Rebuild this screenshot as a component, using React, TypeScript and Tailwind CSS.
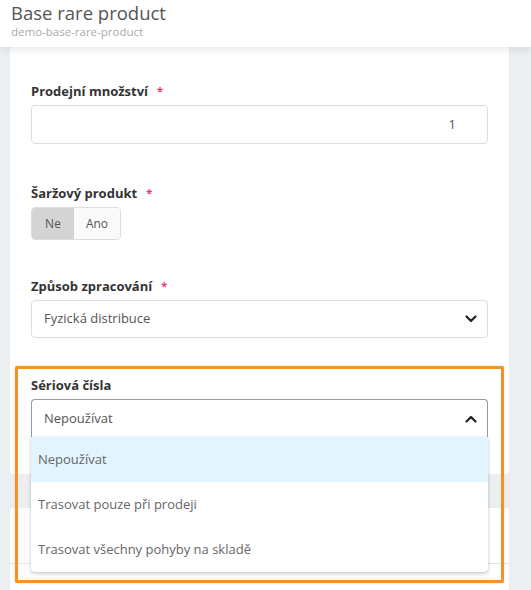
import React from "react";

function Chevron({ up = false }: { up?: boolean }) {
  return (
    <svg width="12" height="8" viewBox="0 0 12 8" className={up ? "rotate-180" : ""}>
      <path d="M1.5 1.5 L6 6 L10.5 1.5" fill="none" stroke="#222" strokeWidth="2.2" strokeLinecap="round" strokeLinejoin="round" />
    </svg>
  );
}

function Label({ text, required = false }: { text: string; required?: boolean }) {
  return (
    <div className="mb-[4px] flex items-center text-[13px] font-bold leading-[20px] text-[#333]">
      {text}
      {required && <span className="ml-[9px] text-[11px] text-[#e8336b]">*</span>}
    </div>
  );
}

const options = ["Nepoužívat", "Trasovat pouze při prodeji", "Trasovat všechny pohyby na skladě"];

export default function App() {
  return (
    <div className="relative h-[590px] w-[531px] overflow-hidden bg-[#eceff2] font-['Open_Sans',sans-serif]">
      {/* header */}
      <div className="relative z-10 h-[47px] bg-white px-[11px] pt-[1px] shadow-[0_2px_8px_rgba(0,0,0,0.10)]">
        <div className="text-[18.5px] leading-[24px] text-[#555]">Base rare product</div>
        <div className="text-[11.5px] leading-[14px] text-[#aaa]">demo-base-rare-product</div>
      </div>

      <div className="pl-[10px] pr-[22px]">
        {/* main card */}
        <div className="rounded-b-[4px] bg-white px-[21px] pb-[37px] pt-[34px]">
          <Label text="Prodejní množství" required />
          <div className="flex h-[39px] items-center justify-end rounded-[4px] border border-[#ddd] px-[31px] text-[13px] text-[#555]">
            1
          </div>

          <div className="mt-[39px]">
            <Label text="Šaržový produkt" required />
            <div className="flex h-[33px] w-[90px] overflow-hidden rounded-[4px] border border-[#ddd] text-[12px] text-[#555]">
              <div className="flex w-[42px] items-center justify-center bg-[#d4d4d4]">Ne</div>
              <div className="flex flex-1 items-center justify-center bg-[#fafafa]">Ano</div>
            </div>
          </div>

          <div className="mt-[36px]">
            <Label text="Způsob zpracování" required />
            <div className="flex h-[38px] items-center justify-between rounded-[4px] border border-[#ddd] pl-[12px] pr-[10px] text-[13px] text-[#555]">
              <span>Fyzická distribuce</span>
              <Chevron />
            </div>
          </div>

          <div className="relative mt-[37px]">
            <Label text="Sériová čísla" />
            <div className="flex h-[38px] items-center justify-between rounded-t-[4px] border border-b-0 border-[#999] pl-[12px] pr-[10px] text-[13px] text-[#555]">
              <span>Nepoužívat</span>
              <Chevron up />
            </div>
            <div className="absolute left-0 right-0 top-full z-10 rounded-b-[4px] bg-white shadow-[0_2px_4px_rgba(0,0,0,0.18),0_0_1px_rgba(0,0,0,0.25)]">
              {options.map((o, i) => (
                <div
                  key={o}
                  className={`flex h-[45px] items-center px-[7px] text-[13px] text-[#666] ${i === 0 ? "bg-[#e2f4fd]" : ""}`}
                >
                  {o}
                </div>
              ))}
            </div>
          </div>
        </div>

        {/* next card */}
        <div className="mt-[34px] h-[200px] rounded-t-[4px] bg-white">
          <div className="h-[56px] border-b border-[#e3e3e3]" />
        </div>
      </div>

      {/* highlight frame */}
      <div className="pointer-events-none absolute left-[15px] top-[366px] z-20 h-[217px] w-[489px] rounded-[2px] border-[3px] border-[#f39229] shadow-[0_0_1px_rgba(120,60,0,0.6)]" />
    </div>
  );
}
